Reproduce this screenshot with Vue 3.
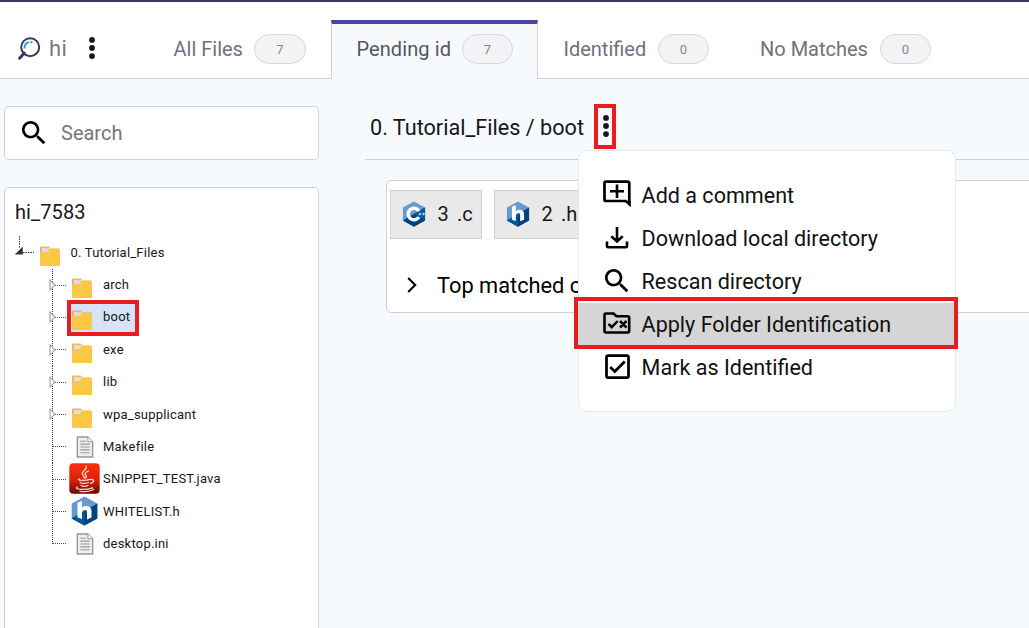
<script setup>
const tabs = [
  { label: 'All Files', count: 7, id: 'all' },
  { label: 'Pending id', count: 7, id: 'pending', active: true },
  { label: 'Identified', count: 0, id: 'identified' },
  { label: 'No Matches', count: 0, id: 'none' },
]

const nodes = [
  { name: 'arch', type: 'folder' },
  { name: 'boot', type: 'folder', selected: true },
  { name: 'exe', type: 'folder' },
  { name: 'lib', type: 'folder' },
  { name: 'wpa_supplicant', type: 'folder' },
  { name: 'Makefile', type: 'file' },
  { name: 'SNIPPET_TEST.java', type: 'java' },
  { name: 'WHITELIST.h', type: 'header' },
  { name: 'desktop.ini', type: 'file' },
]

const check = 'M19 3H5c-1.1 0-2 .9-2 2v14c0 1.1.9 2 2 2h14c1.1 0 2-.9 2-2V5c0-1.1-.9-2-2-2zm0 16H5V5h14v14zM17.99 9l-1.41-1.42-6.59 6.59-2.58-2.57-1.42 1.41 4 3.99z'
const lens = 'M15.5 14h-.79l-.28-.27C15.41 12.59 16 11.11 16 9.5 16 5.91 13.09 3 9.5 3S3 5.91 3 9.5 5.91 16 9.5 16c1.61 0 3.09-.59 4.23-1.57l.27.28v.79l5 4.99L20.49 19l-4.99-5zm-6 0C7.01 14 5 11.99 5 9.5S7.01 5 9.5 5 14 7.01 14 9.5 11.99 14 9.5 14z'

const actions = [
  { label: 'Add a comment', id: 'comment' },
  { label: 'Download local directory', id: 'download' },
  { label: 'Rescan directory', id: 'rescan' },
  { label: 'Apply Folder Identification', id: 'apply', active: true },
  { label: 'Mark as Identified', id: 'mark' },
]
</script>

<template>
  <div class="app">
    <header class="topbar">
      <div class="project">
        <svg class="logo" width="23" height="24" viewBox="0 0 23 24" fill="none">
          <circle cx="12.2" cy="10.2" r="9" stroke="#3b3561" stroke-width="2" />
          <path d="M6.2 16.2 1.6 21.2" stroke="#3b3561" stroke-width="3" stroke-linecap="round" />
          <path d="M6.6 11.500c-.2-3.600 1.500-5.600 4.200-6.300" stroke="#18a0d8" stroke-width="1.800" />
          <path d="M12.400 5c.8 0 1.300.1 2 .6" stroke="#18a0d8" stroke-width="1.800" />
        </svg>
        <span class="project-name">hi</span>
        <svg class="dots" width="6" height="22" viewBox="0 0 6 22"><circle cx="3" cy="2.900" r="2.900" /><circle cx="3" cy="11" r="2.900" /><circle cx="3" cy="19.100" r="2.900" /></svg>
      </div>
      <nav class="tabs">
        <div v-for="t in tabs" :key="t.id" class="tab" :class="[t.id, { active: t.active }]">
          <span class="tab-label">{{ t.label }}</span>
          <span class="badge">{{ t.count }}</span>
        </div>
      </nav>
    </header>

    <div class="body">
      <aside class="side">
        <div class="search">
          <svg width="32" height="32" viewBox="0 0 24 24"><path :d="lens" /></svg>
          <span>Search</span>
        </div>
        <section class="tree">
          <h2>hi_7583</h2>
          <div class="row root">
            <svg class="root-arrow" width="20" height="20" viewBox="0 0 20 20">
              <path d="M5.500 0v12M9 16.500h11" stroke="#333" stroke-dasharray="1.500 1" />
              <path d="M.8 18.500h8v-8z" fill="#333" />
            </svg>
            <svg class="folder" width="20" height="20" viewBox="0 0 20 20">
              <path d="M0 2q0-1.500 1.500-1.500h7L10 2v5H0z" fill="#fbab32" />
              <path d="M3 2.500h16.500V6H3z" fill="#efb949" />
              <path d="M1.500 1.800h8V4l-2 2h-6z" fill="#dedee2" />
              <path d="M0 6h7.500l2-2.500h9q1.500 0 1.500 1.500v14q0 1-1 1H1q-1 0-1-1z" fill="#fac842" />
            </svg>
            <span class="name">0. Tutorial_Files</span>
          </div>
          <ul>
            <li v-for="n in nodes" :key="n.name" class="row child" :class="{ selected: n.selected }">
              <span class="branch">
                <svg v-if="n.type === 'folder'" width="8" height="12" viewBox="0 0 8 12"><path d="M1 1v10L6 6z" fill="#fff" stroke="#aaa" stroke-width="1.200" /></svg>
              </span>
              <span class="entry">
                <span class="icon">
                  <svg v-if="n.type === 'folder'" class="folder" width="20" height="20" viewBox="0 0 20 20">
                    <path d="M0 2q0-1.500 1.500-1.500h7L10 2v5H0z" fill="#fbab32" />
                    <path d="M3 2.500h16.500V6H3z" fill="#efb949" />
                    <path d="M1.500 1.800h8V4l-2 2h-6z" fill="#dedee2" />
                    <path d="M0 6h7.500l2-2.500h9q1.500 0 1.500 1.500v14q0 1-1 1H1q-1 0-1-1z" fill="#fac842" />
                  </svg>
                  <svg v-else-if="n.type === 'file'" class="file" width="18" height="22" viewBox="0 0 18 23">
                    <path d="M1 1h11l5 5v16H1z" fill="#eee" stroke="#999" stroke-width="1.500" />
                    <path d="M12 1v5h5" fill="#fff" stroke="#999" />
                    <path d="M4 5.500h6M4 8.500h10M4 11.500h10M4 14.500h10M4 17.500h10" stroke="#999" stroke-width="1.200" />
                  </svg>
                  <svg v-else-if="n.type === 'java'" width="31" height="31" viewBox="0 0 31 31">
                    <defs><linearGradient id="jg" x2="0" y2="1"><stop stop-color="#fa3010" /><stop offset=".55" stop-color="#d92108" /><stop offset="1" stop-color="#650b02" /></linearGradient></defs>
                    <rect x=".3" y=".3" width="30.400" height="30.400" rx="4" fill="url(#jg)" />
                    <g fill="none" stroke="#fbd5cf" stroke-width="1.300" stroke-linecap="round">
                      <path d="M17 3c2 4-5 5-3.500 8 .5 1.500 2 2 1.500 4M19.500 8c-4 1.500-4 3-2.500 4.500 1 1 .3 2-.7 2.600" />
                      <path d="M10 16c-3 1.500 7 2 11 .3M11 19.500c2 1.200 6 1 8.500 0M12 22.500c2 1 5 1 7 0M22 16.500c4-.5 3 3-.5 4.200M8.500 24c-5 2.500 8 3.500 15 .8M11 28.300c5 .6 11-.1 13.500-2" />
                    </g>
                  </svg>
                  <svg v-else width="27" height="30" viewBox="0 0 27 30">
                    <path d="M13.500.5 26.300 7.500v15L13.500 29.600.7 22.500v-15z" fill="#659ad2" />
                    <path d="M26.300 7.500v15L13.500 29.600.7 22.500 26.300 7.500z" fill="#00427e" />
                    <path d="M.7 22.500 13.500 15v14.600z" fill="#00599c" />
                    <path d="M6.500 6.500 11 5v6.500c4.500-3 9.500-1 9.500 3.500v6.500l-4.500 2V16c0-3-5-3-5 .5V23l-4.500-1.500z" fill="#fff" />
                  </svg>
                </span>
                <span class="name">{{ n.name }}</span>
              </span>
            </li>
          </ul>
        </section>
      </aside>

      <main class="content">
        <div class="crumbs">
          <span class="path">0. Tutorial_Files / boot</span>
          <div class="more">
            <svg class="dots" width="6" height="22" viewBox="0 0 6 22"><circle cx="3" cy="2.900" r="2.900" /><circle cx="3" cy="11" r="2.900" /><circle cx="3" cy="19.100" r="2.900" /></svg>
            <div class="menu">
              <div v-for="a in actions" :key="a.id" class="item" :class="[a.id, { active: a.active }]">
                <span class="item-icon">
                  <svg v-if="a.id === 'comment'" width="28" height="28" viewBox="0 0 28 28" fill="none" stroke="#000">
                    <path d="M3 1.700h21.500q1.800 0 1.800 1.800v20.500l-3.500-3H3q-1.500 0-1.500-1.500V3.200Q1.500 1.700 3 1.700z" stroke-width="2.700" />
                    <path d="M22 21h5.600v5.700z" fill="#000" stroke="none" />
                    <path d="M7 11.300h14M14 4.600V18" stroke-width="2.600" />
                  </svg>
                  <svg v-else-if="a.id === 'download'" width="28" height="28" viewBox="0 0 28 28" fill="none" stroke="#000" stroke-width="2.600">
                    <path d="M14 3v14M8.300 12.200 14 17.400l5.700-5.200" /><path d="M4 17.500v4.700q0 1.100 1.200 1.100h17.600q1.200 0 1.200-1.100v-4.700" />
                  </svg>
                  <svg v-else-if="a.id === 'rescan'" width="32" height="32" viewBox="0 0 24 24"><path :d="lens" /></svg>
                  <svg v-else-if="a.id === 'apply'" width="28" height="24" viewBox="0 0 28 24" fill="none" stroke="#000">
                    <path d="M3 2.500h7.500l3 2.700h11.200q1.500 0 1.500 1.500V20q0 1.500-1.500 1.500H3q-1.500 0-1.500-1.500V4q0-1.500 1.500-1.500z" stroke-width="2.600" />
                    <path d="m5.500 13 3.200 3.200 6-6.200M17 10l6.500 6.500M23.500 10 17 16.500" stroke-width="2.500" />
                  </svg>
                  <svg v-else width="33" height="33" viewBox="0 0 24 24"><path :d="check" /></svg>
                </span>
                <span class="item-label">{{ a.label }}</span>
              </div>
            </div>
          </div>
        </div>

        <section class="card">
          <div class="chips">
            <div class="chip">
              <svg width="24" height="26" viewBox="0 0 27 30">
                <path d="M13.500.5 26.300 7.500v15L13.500 29.600.7 22.500v-15z" fill="#659ad2" />
                <path d="M26.300 7.500v15L13.500 29.600.7 22.500 26.300 7.500z" fill="#00427e" />
                <path d="M26.300 7.500v15L13.500 15z" fill="#00599c" />
                <path d="M19.200 11.600a6.700 6.700 0 1 0 0 6.900" fill="none" stroke="#fff" stroke-width="4" />
                <path d="M18.700 15h3.400M20.400 13.300v3.400M23 15h3.200M24.600 13.400v3.200" stroke="#c9def0" stroke-width="1.100" />
              </svg>
              <span class="num">3</span><span>.c</span>
            </div>
            <div class="chip">
              <svg width="24" height="26" viewBox="0 0 27 30">
                <path d="M13.500.5 26.300 7.500v15L13.500 29.600.7 22.500v-15z" fill="#659ad2" />
                <path d="M26.300 7.500v15L13.500 29.600.7 22.500 26.300 7.500z" fill="#00427e" />
                <path d="M.7 22.500 13.500 15v14.600z" fill="#00599c" />
                <path d="M6.500 6.500 11 5v6.500c4.500-3 9.500-1 9.500 3.500v6.500l-4.500 2V16c0-3-5-3-5 .5V23l-4.500-1.500z" fill="#fff" />
              </svg>
              <span class="num">2</span><span>.h</span>
            </div>
          </div>
          <div class="matched">
            <svg width="10" height="16" viewBox="0 0 10 16"><path d="m1.200 1 7 7-7 7" fill="none" stroke="#000" stroke-width="2.100" /></svg>
            <span>Top matched c</span>
          </div>
        </section>
      </main>
    </div>
  </div>
</template>

<style>
body { background: #f6fafd; overflow: hidden; }
</style>

<style scoped>
* { box-sizing: border-box; }
.app {
  width: 1029px; height: 628px; overflow: hidden;
  display: flex; flex-direction: column;
  background: #f6fafd; color: #17171b;
  font-family: Roboto, "Liberation Sans", sans-serif;
}
svg { display: block; flex: none; }
span { white-space: nowrap; }
.topbar {
  height: 79px; flex: none; display: flex;
  background: #fff; border-top: 2px solid #3c3663; border-bottom: 1px solid #d1d0d9;
}
.project { width: 149px; display: flex; padding: 35px 0 0 18px; }
.project-name { width: 37px; margin: -1px 0 0 8px; font-size: 22px; letter-spacing: .4px; line-height: 26px; color: #787885; }
.project .dots { margin-left: 2.6px; }
.dots { fill: #17171b; }
.tabs { display: flex; padding-top: 18px; }
.tab {
  height: 59px; flex: none; display: flex; padding: 14px 0 0 24px;
  border: solid transparent; border-width: 0 1px;
  color: #70707e; font-size: 20px; line-height: 30px;
}
.tab.all { width: 182px; padding-left: 23.5px; }
.tab.pending { width: 207px; padding-left: 24.4px; }
.tab.identified { width: 197px; padding-left: 24.5px; }
.tab.none { width: 200px; }
.tab.active {
  padding-top: 10px; color: #55555f; background: #f6fafd; letter-spacing: .1px;
  border-color: #d1d0d9; border-top: 4px solid #4a44a0;
}
.tab-label { width: 94.5px; }
.all .tab-label { width: 80.5px; }
.pending .tab-label { width: 105.6px; }
.none .tab-label { width: 120px; }
.badge {
  width: 51px; height: 30px; border: 1px solid #d8d8dc; border-radius: 15px;
  background: #f3f3f6; color: #85858e; font-size: 13px; line-height: 29px; text-align: center;
}
.all .badge { width: 52px; }
.body { flex: 1; min-height: 0; display: flex; }
.side { width: 319px; flex: none; padding: 27px 0 0 4px; display: flex; flex-direction: column; gap: 27px; }
.search {
  height: 54px; flex: none; display: flex; align-items: center; padding-left: 13px;
  background: #fff; border: 1px solid #d1d0d9; border-radius: 5px;
  color: #76767a; font-size: 20px;
}
.search svg { margin-right: 11px; fill: #000; }
.tree {
  flex: 1; margin-bottom: -10px; background: #fff;
  border: 1px solid #d1d0d9; border-radius: 5px 5px 0 0;
}
h2 { margin: 11px 0 0 10px; font-size: 20px; letter-spacing: .1px; line-height: 26px; font-weight: 400; }
.row { display: flex; height: 32.33px; align-items: center; font-size: 13px; letter-spacing: .22px; }
.root { margin-top: 11px; padding-left: 9px; }
.root-arrow { margin: -13px 0 0; }
.folder { margin-top: 7px; }
.root .folder { margin-left: 5.5px; }
.root .name { margin-left: 11px; }
ul { list-style: none; margin: .5px 0 0; padding: 0 0 0 44px; }
.branch {
  width: 18px; height: 32.33px; flex: none; display: flex; align-items: center;
  background:
    repeating-linear-gradient(to bottom, #333 0 1px, transparent 1px 2px) 3px 0 / 1px 100% no-repeat,
    repeating-linear-gradient(to right, #555 0 1px, transparent 1px 2px) 4px 16px / 14px 1px no-repeat;
}
.child:last-child .branch {
  background-size: 1px 17px, 14px 1px;
}
.entry { height: 28px; display: flex; align-items: center; padding-right: 5px; }
.icon { width: 33px; height: 32px; flex: none; display: flex; align-items: center; justify-content: center; margin: 0 2px 0 1px; }
.icon .folder { margin-left: -6px; }
.child.selected .entry {
  height: 36px; margin-top: 1px; padding: 0 5px 0 0; border: 4px solid #e81d1f; background: #d6e2f8;
}
.selected .icon { margin-left: -3px; }
.selected .icon, .selected .name { margin-top: -2px; }
.content { flex: 1; min-width: 0; padding: 0 0 0 46px; }
.crumbs {
  height: 81px; display: flex; align-items: flex-start; padding: 25px 0 0 5px;
  border-bottom: 1px solid #d1d0d9; font-size: 21.65px; line-height: 48px;
}
.path { width: 224px; }
.more {
  position: relative; width: 22px; height: 45px; display: flex;
  justify-content: center; padding-top: 7px; border: 4px solid #e81d1f;
}
.more > .dots { margin-left: 1px; }
.menu {
  position: absolute; z-index: 2; left: -20px; top: 42px; width: 378px; height: 262px;
  padding-top: 23px; background: #fff; border: 1px solid #e8e9ec; border-radius: 9px;
}
.item {
  height: 43px; display: flex; align-items: center; padding-left: 24.3px;
  font-size: 21.55px; line-height: 30px; color: #111;
}
.item-icon { width: 28px; display: flex; justify-content: center; margin: -2px 10.3px 0 0; }
.comment .item-icon { margin-top: -3px; }
.item.active {
  height: 52px; margin: -6px -3px -3px -5px; padding: 2px 0 0 25.3px;
  border: 4px solid #e81d1f; background: #d5d5d5; box-shadow: inset 0 2px #fff;
}
.active .item-label { margin-top: 2px; }
.card {
  height: 133px; margin: 20px -10px 0 21px; padding: 9px 0 0 3px;
  background: #fff; border: 1px solid #d1d0d9; border-radius: 5px;
}
.chips { display: flex; gap: 12px; }
.chip {
  width: 92px; height: 49px; flex: none; display: flex; align-items: center; padding: 0 0 2px 11px;
  background: #e9e9e9; border: 1px solid #d2d2d2; font-size: 20px;
}
.num { width: 19.5px; margin-left: 11.4px; }
.matched { display: flex; align-items: center; margin-top: 32px; padding-left: 17px; font-size: 21.8px; line-height: 30px; color: #000; }
.matched svg { margin-top: -2px; }
.matched span { margin-left: 20px; }
</style>
